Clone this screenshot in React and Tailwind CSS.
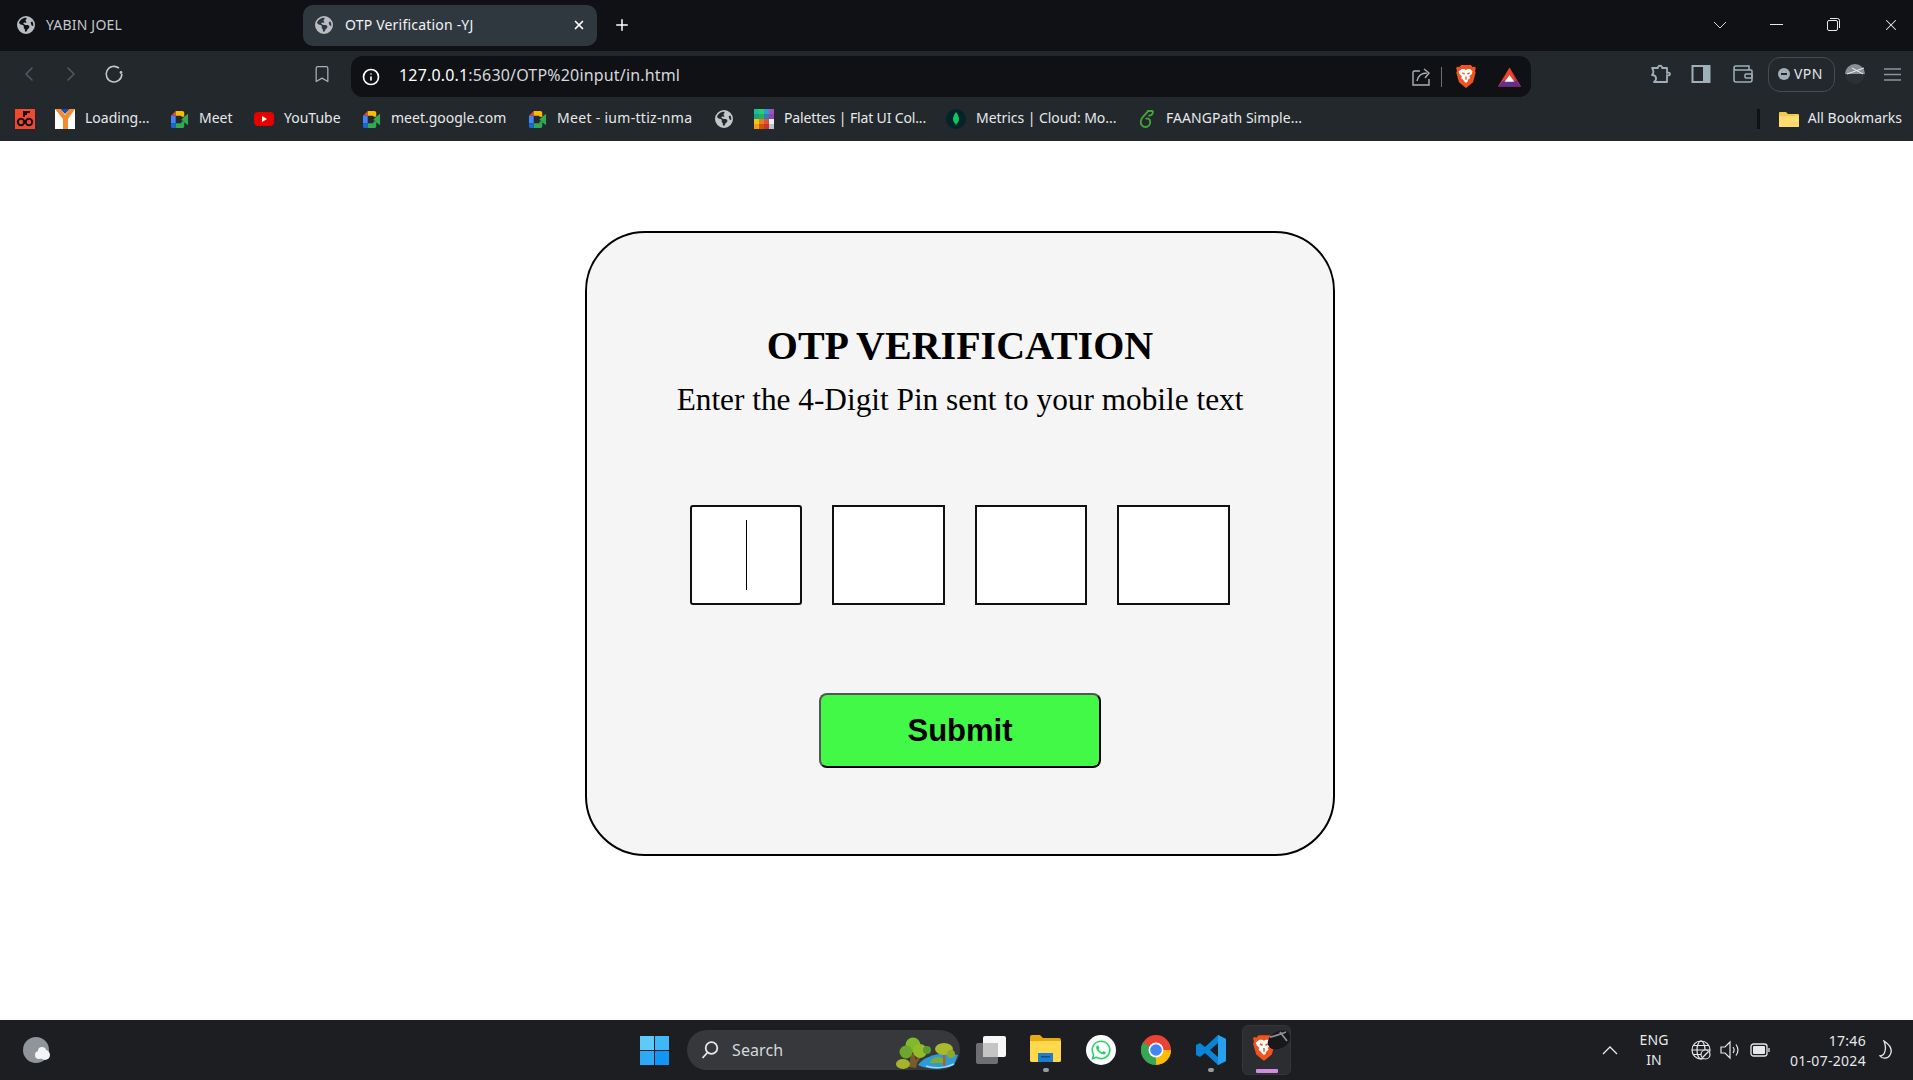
import React from "react";
import { FaEarthAmericas, FaWhatsapp } from "react-icons/fa6";
import { Bookmark, ChevronLeft, ChevronRight, Info, Plus, X } from "lucide-react";

const uiFont = "font-['Noto_Sans','Open_Sans',sans-serif]";

function MeetIcon({ className }) {
  return (
    <svg viewBox="0 0 20 20" className={className}>
      <path d="M1 6 6 1v5z" fill="#ea4335" />
      <path d="M1 6h5v8H1z" fill="#4285f4" />
      <path d="M1 14h5v5H3a2 2 0 0 1-2-2z" fill="#1967d2" />
      <path d="M6 1h7a2 2 0 0 1 2 2v4h-3V6H6z" fill="#fbbc04" />
      <path d="M6 14h6v-2h3v5a2 2 0 0 1-2 2H6z" fill="#34a853" />
      <path d="m12 10 3-3 4-3v12l-4-3z" fill="#34a853" />
    </svg>
  );
}

function LoadingFavicon({ className }) {
  return (
    <svg viewBox="0 0 20 20" className={className}>
      <path d="M0 0h20v20H0z" fill="#fff" />
      <path d="M5 0h10l-5 5z" fill="#1d4fa3" />
      <path d="M0 0h5l5 6 5-6h5l-7 10v10H8V10z" fill="#f58a2e" />
    </svg>
  );
}

function RedFavicon({ className }) {
  return (
    <svg viewBox="0 0 20 20" className={className}>
      <path d="M0 0h20v20H0z" fill="#f0492e" />
      <circle cx="6" cy="13" r="3.2" fill="none" stroke="#111" strokeWidth="2" />
      <circle cx="14" cy="13" r="3.2" fill="none" stroke="#111" strokeWidth="2" />
      <path d="M9 8V3h6M9 5h3" fill="none" stroke="#111" strokeWidth="2" />
    </svg>
  );
}

function YoutubeIcon({ className }) {
  return (
    <svg viewBox="0 0 20 20" className={className}>
      <rect x="0" y="3" width="20" height="14" rx="4" fill="#e60000" />
      <path d="m8 7 5 3-5 3z" fill="#fff" />
    </svg>
  );
}

function PalettesIcon({ className }) {
  const cells = [
    "#1abc9c", "#2ecc71", "#3498db", "#9b59b6",
    "#16a085", "#27ae60", "#2980b9", "#8e44ad",
    "#f1c40f", "#e67e22", "#e74c3c", "#ecf0f1",
    "#f39c12", "#d35400", "#c0392b", "#bdc3c7",
  ];
  return (
    <svg viewBox="0 0 20 20" className={className}>
      {cells.map((c, i) => (
        <rect key={i} x={(i % 4) * 5} y={Math.floor(i / 4) * 5} width="5" height="5" fill={c} />
      ))}
    </svg>
  );
}

function MongoIcon({ className }) {
  return (
    <svg viewBox="0 0 20 20" className={className}>
      <circle cx="10" cy="10" r="10" fill="#04242c" />
      <path d="M10 3c2 3 3 5 3 7 0 3-2 4-2.500 5l-.5 2-.5-2C9 14 7 13 7 10c0-2 1-4 3-7z" fill="#13c85a" />
    </svg>
  );
}

function FaangIcon({ className }) {
  return (
    <svg viewBox="0 0 16 20" className={className} fill="none" stroke="#43a534" strokeWidth="2">
      <path d="M15 1.500H9.500C9 4 3 7 2 12c-.8 4 2 6.500 5 6.500s5-2.500 5-5.500-3-4.500-5-3" />
      <path d="M15 1.500c0 3-2 5-5 5" />
    </svg>
  );
}

function BraveLion({ className }) {
  return (
    <svg viewBox="0 0 24 28" className={className}>
      <path d="M6 0h12l2 2.500 3-.5 1 2-1 3 .8 2.500L20.500 21 14 26.500 12 28l-2-1.500L3.500 21 .2 9.500 1 7 0 4l1-2 3 .5z" fill="#f1531f" />
      <path d="M7 5h3l2 1 2-1h3l3 3-1 3-3 3 1 2-2.500 2L14 20l-2 2-2-2-1.500-2L6 16l1-2-3-3-1-3z" fill="#fff" />
      <path d="M7.500 9.500 10.500 11M16.500 9.500 13.500 11M12 14v4" stroke="#f1531f" strokeWidth="1.600" fill="none" />
    </svg>
  );
}

const bookmarks = [
  { icon: <RedFavicon className="w-[20px] h-[20px] ml-[15px]" /> },
  { icon: <LoadingFavicon className="w-[20px] h-[20px] ml-[20px]" />, label: "Loading...", textClass: "ml-[10px] w-[63px]" },
  { icon: <MeetIcon className="w-[19px] h-[19px] ml-[22px]" />, label: "Meet", textClass: "ml-[10px] w-[34px]" },
  { icon: <YoutubeIcon className="w-[20px] h-[20px] ml-[21px]" />, label: "YouTube", textClass: "ml-[10px] w-[57px]" },
  { icon: <MeetIcon className="w-[19px] h-[19px] ml-[21px]" />, label: "meet.google.com", textClass: "ml-[10px] w-[115px]" },
  { icon: <MeetIcon className="w-[19px] h-[19px] ml-[22px]" />, label: "Meet - ium-ttiz-nma", textClass: "ml-[10px] w-[135px] tracking-[0.3px]" },
  { icon: <FaEarthAmericas className="w-[18px] h-[18px] ml-[23px] text-[#c3c7cb]" /> },
  { icon: <PalettesIcon className="w-[20px] h-[20px] ml-[21px]" />, label: "Palettes | Flat UI Col...", textClass: "ml-[10px] w-[142px] tracking-[-0.15px]" },
  { icon: <MongoIcon className="w-[20px] h-[20px] ml-[20px]" />, label: "Metrics | Cloud: Mo...", textClass: "ml-[10px] w-[140px] tracking-[-0.05px]" },
  { icon: <FaangIcon className="w-[15px] h-[20px] ml-[23px]" />, label: "FAANGPath Simple...", textClass: "ml-[12px] w-[136px] tracking-[0.05px]" },
];

function TabBar() {
  return (
    <div className={`flex items-center h-[51px] pb-[2px] bg-[#0f1115] ${uiFont}`}>
      <FaEarthAmericas className="w-[18px] h-[18px] ml-[17px] text-[#b9bdc1]" />
      <span className="ml-[11px] w-[76px] text-[14px] tracking-[0.2px] text-[#c3c7cb] whitespace-nowrap">YABIN JOEL</span>
      <div className="flex items-center ml-[181px] mt-[2px] w-[294px] h-[41px] pb-[2px] rounded-[10px] bg-[#30383f]">
        <FaEarthAmericas className="w-[18px] h-[18px] ml-[12px] text-[#b9bdc1]" />
        <span className="ml-[12px] w-[130px] text-[14px] tracking-[0.2px] text-[#f0f2f3] whitespace-nowrap">OTP Verification -YJ</span>
        <X className="w-[14px] h-[14px] ml-[97px] text-white" strokeWidth={3} />
      </div>
      <Plus className="w-[18px] h-[18px] ml-[16px] text-white" strokeWidth={2} />
      <div className="flex-1" />
      <svg viewBox="0 0 14 8" className="w-[14px] h-[8px] text-[#d5d8da]" fill="none" stroke="currentColor"><path d="m1 1 6 6 6-6" /></svg>
      <div className="w-[13px] h-[1px] ml-[43px] bg-[#e6e8ea]" />
      <svg viewBox="0 0 13 13" className="w-[13px] h-[13px] ml-[44px] text-[#e6e8ea]" fill="none" stroke="currentColor">
        <rect x="0.500" y="2.500" width="10" height="10" rx="1.500" />
        <path d="M3 .5h7.500a2 2 0 0 1 2 2V10" />
      </svg>
      <X className="w-[18px] h-[18px] ml-[42px] mr-[13px] text-[#e6e8ea]" strokeWidth={1.4} />
    </div>
  );
}

function ToolBar() {
  return (
    <div className={`flex items-center h-[46px] bg-[#22282c] ${uiFont}`}>
      <ChevronLeft className="w-[24px] h-[24px] ml-[17px] text-[#545a5f]" strokeWidth={1.5} />
      <ChevronRight className="w-[24px] h-[24px] ml-[18px] text-[#545a5f]" strokeWidth={1.5} />
      <svg viewBox="0 0 20 20" className="w-[20px] h-[20px] ml-[21px] text-[#c3c7cb]" fill="none" stroke="currentColor" strokeWidth="1.600">
        <path d="M15 4.200A7.800 7.800 0 1 0 17.800 10" />
        <circle cx="17" cy="8.500" r="1.400" fill="currentColor" stroke="none" />
      </svg>
      <Bookmark className="w-[20px] h-[20px] ml-[188px] text-[#aab0b5]" strokeWidth={1.5} />
      <div className="flex items-center self-end ml-[19px] w-[1180px] h-[41px] rounded-[12px] bg-[#0f1115]">
        <Info className="w-[18px] h-[18px] ml-[11px] text-white" strokeWidth={2.2} />
        <span className="ml-[19px] mb-[4px] w-[280px] text-[16px] tracking-[0.17px] whitespace-nowrap text-[#d5d9dc]">
          <span className="text-white">127.0.0.1</span>:5630/OTP%20input/in.html
        </span>
        <div className="flex-1" />
        <svg viewBox="0 0 20 20" className="w-[20px] h-[20px] text-[#aab0b5]" fill="none" stroke="currentColor" strokeWidth="1.400">
          <path d="M9 4H3.500A1.500 1.500 0 0 0 2 5.500V18h16v-6" />
          <path d="M6 14c1-5 5-8 10-8M13 2l5 4-4 5" />
        </svg>
        <div className="w-[1px] h-[20px] ml-[10px] bg-[#6a7075]" />
        <BraveLion className="w-[20px] h-[23px] ml-[14px]" />
        <svg viewBox="0 0 24 20" className="w-[23px] h-[20px] ml-[22px]">
          <path d="M12 0 24 20H0z" fill="#e8452c" />
          <path d="M0 20h24l-5-6H5z" fill="#662d91" />
          <path d="M12 0 24 20l-5-6z" fill="#9e1f63" />
          <path d="m12 8 5 7H7z" fill="#fff" />
        </svg>
        <div className="w-[10px]" />
      </div>
      <div className="flex-1" />
      <svg viewBox="0 0 22 22" className="w-[22px] h-[22px] text-[#9fb0b8]" fill="none" stroke="currentColor" strokeWidth="1.800">
        <path d="M2 5h6c-1-3 5-3 4 0h5v5c2-1 3 0 3 1s-1 2-3 1v7H4c3-2 3-7-2-7 2-2 2-4 0-7z" strokeLinejoin="round" />
      </svg>
      <svg viewBox="0 0 20 18" className="w-[20px] h-[18px] ml-[19px] text-[#9fb0b8]">
        <path d="M1.500 1h17v16h-17z" fill="none" stroke="currentColor" strokeWidth="2" />
        <path d="M12 1h7v16h-7z" fill="currentColor" />
      </svg>
      <svg viewBox="0 0 20 18" className="w-[20px] h-[18px] ml-[22px] text-[#9fb0b8]" fill="none" stroke="currentColor" strokeWidth="1.500">
        <path d="M1 4v11a2 2 0 0 0 2 2h14a2 2 0 0 0 2-2V6a1 1 0 0 0-1-1H3a2 2 0 0 1 0-4h13v4" />
        <rect x="12" y="9" width="7" height="4" rx="1" />
      </svg>
      <div className="flex items-center ml-[15px] w-[67px] h-[35px] rounded-[12px] border border-[#444c52]">
        <svg viewBox="0 0 12 12" className="w-[12px] h-[12px] ml-[9px]">
          <circle cx="6" cy="6" r="6" fill="#a3adb5" />
          <path d="M3 5h6v2H3z" fill="#22282c" />
        </svg>
        <span className="ml-[4px] mb-[1px] text-[14px] tracking-[0.4px] text-[#e2e5e7]">VPN</span>
      </div>
      <svg viewBox="0 0 20 20" className="w-[20px] h-[20px] ml-[10px]">
        <circle cx="10" cy="10" r="10" fill="#2c3035" />
        <path d="M0 10a10 10 0 0 1 20 0z" fill="#8a9096" />
        <path d="M2 10 19 4M7 4l11 6" stroke="#f0f0f0" strokeWidth="1" />
      </svg>
      <svg viewBox="0 0 17 13" className="w-[17px] h-[13px] ml-[19px] mr-[12px] text-[#8c959b]" fill="none" stroke="currentColor" strokeWidth="1.500">
        <path d="M0 1h17M0 6.500h17M0 12h17" />
      </svg>
    </div>
  );
}

function BookmarkBar() {
  return (
    <div className={`flex items-center h-[44px] bg-[#22282c] text-[14px] text-[#e6e8ea] ${uiFont}`}>
      {bookmarks.map((b, i) => (
        <React.Fragment key={i}>
          {b.icon}
          {b.label && <span className={`mb-[4px] whitespace-nowrap ${b.textClass}`}>{b.label}</span>}
        </React.Fragment>
      ))}
      <div className="flex-1" />
      <div className="w-[3px] h-[20px] bg-[#0f1115]" />
      <svg viewBox="0 0 20 16" className="w-[20px] h-[16px] ml-[19px]">
        <path d="M0 2a1 1 0 0 1 1-1h6l2 2h10a1 1 0 0 1 1 1v11a1 1 0 0 1-1 1H1a1 1 0 0 1-1-1z" fill="#f8c84a" />
        <path d="M0 5h20v10a1 1 0 0 1-1 1H1a1 1 0 0 1-1-1z" fill="#ffdc70" />
      </svg>
      <span className="ml-[9px] mb-[4px] mr-[11px]">All Bookmarks</span>
    </div>
  );
}

function OtpCard() {
  return (
    <div className="box-border flex flex-col items-center w-[750px] h-[625px] ml-[585px] mt-[90px] rounded-[60px] border-2 border-black bg-[#f5f5f5] font-['Liberation_Serif',serif] text-black">
      <h1 className="mt-[90px] text-[40px] leading-[46px] font-bold">OTP VERIFICATION</h1>
      <p className="mt-[14px] text-[31.3px] leading-[34px] whitespace-nowrap">Enter the 4-Digit Pin sent to your mobile text</p>
      <div className="flex gap-[30px] mt-[88px]">
        <div className="relative">
          <input className="block box-border w-[112px] h-[100px] rounded-[3px] border-2 border-[#101010] bg-white outline-none" />
          <div className="absolute left-[56px] top-[15px] w-[1px] h-[70px] bg-black" />
        </div>
        <input className="block box-border w-[113px] h-[100px] border-2 border-[#101010] bg-white outline-none" />
        <input className="block box-border w-[112px] h-[100px] border-2 border-[#101010] bg-white outline-none" />
        <input className="block box-border w-[113px] h-[100px] border-2 border-[#101010] bg-white outline-none" />
      </div>
      <button className="box-border w-[282px] h-[75px] mt-[88px] pt-[1px] rounded-[8px] border-2 border-t-[#555] border-l-[#555] border-r-black border-b-black bg-[#43f947] font-['Liberation_Sans',sans-serif] text-[31px] font-bold">
        Submit
      </button>
    </div>
  );
}

function SearchScene({ className }) {
  return (
    <svg viewBox="0 0 62 32" className={className}>
      <path d="M22 28c6-9 24-14 40-10l-4 10c-10 5-26 5-36 0z" fill="#2f9ad8" />
      <path d="M30 29c8 3 20 2 28-2" stroke="#9ed8f2" strokeWidth="1.500" fill="none" />
      <path d="M34 26c1-7 14-8 15 0z" fill="#7fae2a" />
      <path d="m13 30 2-13h3l2 6 5-7 2 1-6 9-1 5z" fill="#7b5a2c" />
      <rect x="47" y="14" width="2.500" height="15" fill="#a8642a" />
      <circle cx="17" cy="8" r="7.500" fill="#7fb92c" />
      <circle cx="24" cy="14" r="7" fill="#94bb2a" />
      <circle cx="10" cy="15" r="6.500" fill="#6ea52c" />
      <circle cx="31" cy="13" r="4" fill="#5c9a30" />
      <ellipse cx="7" cy="27" rx="7" ry="5" fill="#a3b52a" />
      <ellipse cx="48" cy="12" rx="9" ry="6" fill="#a9bb2b" />
      <ellipse cx="55" cy="17" rx="4" ry="4" fill="#8fa82a" />
    </svg>
  );
}

function TaskBar() {
  return (
    <div className={`flex items-center h-[60px] bg-[#1c1e21] text-[#e6e8ea] ${uiFont}`}>
      <svg viewBox="0 0 28 26" className="w-[28px] h-[26px] ml-[23px]">
        <ellipse cx="13" cy="13" rx="13" ry="13" fill="#8f959b" />
        <circle cx="16" cy="18" r="4" fill="#f3f4f5" />
        <circle cx="22" cy="18" r="5" fill="#f3f4f5" />
        <circle cx="19" cy="14" r="4" fill="#f3f4f5" />
      </svg>
      <svg viewBox="0 0 29 29" className="w-[29px] h-[29px] ml-[589px]">
        <rect x="0" y="0" width="14" height="14" fill="#5ccbf9" />
        <rect x="15" y="0" width="14" height="14" fill="#3fb8f8" />
        <rect x="0" y="15" width="14" height="14" fill="#2ca9f7" />
        <rect x="15" y="15" width="14" height="14" fill="#1196f5" />
      </svg>
      <div className="flex items-center ml-[18px] w-[273px] h-[40px] rounded-[20px] bg-[#36383c]">
        <svg viewBox="0 0 18 18" className="w-[18px] h-[18px] ml-[14px] text-[#e6e8ea]" fill="none" stroke="currentColor" strokeWidth="1.800">
          <circle cx="10.500" cy="7" r="5.800" />
          <path d="m6.500 11.500-5 5.500" />
        </svg>
        <span className="ml-[13px] w-[52px] text-[16px] tracking-[0.1px] text-[#d5d8da]">Search</span>
        <SearchScene className="w-[62px] h-[32px] ml-[112px] mt-[5px]" />
      </div>
      <svg viewBox="0 0 30 28" className="w-[30px] h-[28px] ml-[16px]">
        <rect x="0" y="7" width="22" height="21" rx="2" fill="#6d6f72" />
        <rect x="7" y="0" width="23" height="21" rx="2" fill="#f7f7f7" />
        <rect x="7" y="7" width="15" height="14" fill="#c4c4c4" />
      </svg>
      <div className="flex flex-col items-center ml-[24px] w-[31px]">
        <svg viewBox="0 0 31 27" className="w-[31px] h-[27px] mt-[7px]">
          <path d="M0 2a2 2 0 0 1 2-2h8l3 3h16a2 2 0 0 1 2 2v20a2 2 0 0 1-2 2H2a2 2 0 0 1-2-2z" fill="#e8a90e" />
          <path d="M0 6h31v19a2 2 0 0 1-2 2H2a2 2 0 0 1-2-2z" fill="#ffd84d" />
          <path d="M8 18h15v9H8z" fill="#1b7fd0" />
          <path d="M11 21h9v1.500h-9z" fill="#0a4f8f" />
        </svg>
        <div className="w-[6px] h-[4px] mt-[6px] rounded-full bg-[#9a9c9e]" />
      </div>
      <div className="flex items-center justify-center w-[30px] h-[30px] ml-[25px] rounded-full bg-white">
        <FaWhatsapp className="w-[22px] h-[22px] text-[#25d366]" />
      </div>
      <svg viewBox="0 0 30 30" className="w-[30px] h-[30px] ml-[25px]">
        <circle cx="15" cy="15" r="15" fill="#ea4335" />
        <path d="M15 15 2 7.500A15 15 0 0 0 15 30z" fill="#34a853" />
        <path d="M15 15h15a15 15 0 0 1-15 15z" fill="#fbbc04" />
        <circle cx="15" cy="15" r="7.500" fill="#fff" />
        <circle cx="15" cy="15" r="5.800" fill="#4285f4" />
      </svg>
      <div className="flex flex-col items-center ml-[25px] w-[30px]">
        <svg viewBox="0 0 30 30" className="w-[30px] h-[30px] mt-[7px]">
          <path d="M22 0 30 4v22l-8 4L9 18l-5 4-4-2v-10l4-2 5 4z" fill="#0a84d6" />
          <path d="m22 8-8 7 8 7z" fill="#1c1e21" />
          <path d="M22 0 30 4v22l-8 4z" fill="#27a0ee" />
        </svg>
        <div className="w-[6px] h-[4px] mt-[3px] rounded-full bg-[#9a9c9e]" />
      </div>
      <div className="relative flex flex-col items-center justify-end ml-[16px] w-[49px] h-[50px] rounded-[6px] border border-[#34363a] bg-[#2b2d30]">
        <BraveLion className="w-[22px] h-[26px] mb-[8px] -ml-[5px]" />
        <div className="w-[22px] h-[4px] mb-[1px] rounded-[1px] bg-[#cf8ce0]" />
        <svg viewBox="0 0 24 22" className="absolute left-[24px] top-[3px] w-[24px] h-[22px]">
          <ellipse cx="12" cy="11" rx="12" ry="8.500" transform="rotate(-30 12 11)" fill="#17181a" />
          <path d="M3 8c5-1 10-3 16-5M13 3l7 9" stroke="#8b8e92" strokeWidth="1.800" fill="none" />
        </svg>
      </div>
      <div className="flex-1" />
      <svg viewBox="0 0 16 9" className="w-[16px] h-[9px] text-[#e6e8ea]" fill="none" stroke="currentColor" strokeWidth="1.300">
        <path d="m1 8 7-7 7 7" />
      </svg>
      <div className="flex flex-col items-center ml-[21px] w-[30px] text-[14px] leading-[20px] tracking-[0.1px]">
        <span>ENG</span>
        <span>IN</span>
      </div>
      <svg viewBox="0 0 20 20" className="w-[20px] h-[20px] ml-[22px]" fill="none" stroke="#e6e8ea" strokeWidth="1.200">
        <circle cx="10" cy="10" r="9" />
        <ellipse cx="10" cy="10" rx="4" ry="9" />
        <path d="M1 10h18M2 5.500h16M2 14.500h16" />
        <circle cx="14.500" cy="14.500" r="4.500" fill="#1c1e21" />
        <path d="m11.500 17.500 6-6" />
      </svg>
      <svg viewBox="0 0 20 20" className="w-[20px] h-[20px] ml-[9px]" fill="none" stroke="#e6e8ea" strokeWidth="1.200">
        <path d="M1 7h4l5-5v16l-5-5H1z" />
        <path d="M13 7c1.500 2 1.500 4 0 6M16 4.500c2.500 3.500 2.500 7.500 0 11" />
      </svg>
      <svg viewBox="0 0 20 14" className="w-[20px] h-[14px] ml-[10px]" fill="none" stroke="#e6e8ea" strokeWidth="1.300">
        <rect x="1" y="1" width="16" height="12" rx="2.500" />
        <rect x="3" y="3" width="12" height="8" rx="1" fill="#e6e8ea" stroke="none" />
        <path d="M19 5v4" />
      </svg>
      <div className="flex flex-col items-end ml-[20px] w-[76px] text-[14px] leading-[19px] tracking-[0.3px]">
        <span className="mb-[1px]">17:46</span>
        <span className="whitespace-nowrap">01-07-2024</span>
      </div>
      <svg viewBox="0 0 16 20" className="w-[16px] h-[20px] ml-[12px] mr-[19px]" fill="none" stroke="#e6e8ea" strokeWidth="1.300">
        <path d="M6 1c6 4 9 9 6 14-2 4-8 4-10 1 5 0 7-8 4-15z" />
      </svg>
    </div>
  );
}

export default function App() {
  return (
    <div className="flex flex-col w-[1913px] h-[1080px] overflow-hidden bg-white">
      <TabBar />
      <ToolBar />
      <BookmarkBar />
      <div className="flex-1">
        <OtpCard />
      </div>
      <TaskBar />
    </div>
  );
}
